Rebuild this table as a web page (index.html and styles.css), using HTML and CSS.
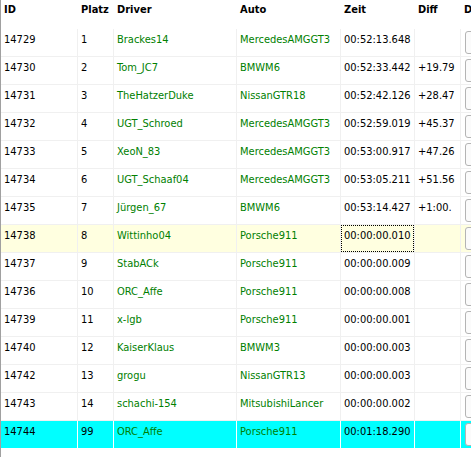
FILE: index.html
```html
<!DOCTYPE html>
<html lang="de">
<head>
<meta charset="utf-8">
<title>Ergebnisse</title>
<link rel="stylesheet" href="styles.css">
</head>
<body>
<div class="grid-wrap">
<table class="grid">
  <colgroup>
    <col class="c-id"><col class="c-platz"><col class="c-driver"><col class="c-auto"><col class="c-zeit"><col class="c-diff"><col class="c-d">
  </colgroup>
  <thead>
    <tr class="head">
      <th>ID</th><th>Platz</th><th>Driver</th><th>Auto</th><th>Zeit</th><th>Diff</th><th>D</th>
    </tr>
  </thead>
  <tbody>
    <tr><td>14729</td><td>1</td><td class="g">Brackes14</td><td class="g">MercedesAMGGT3</td><td>00:52:13.648</td><td></td><td class="btn-cell"><span class="btn"></span></td></tr>
    <tr><td>14730</td><td>2</td><td class="g">Tom_JC7</td><td class="g">BMWM6</td><td>00:52:33.442</td><td>+19.79</td><td class="btn-cell"><span class="btn"></span></td></tr>
    <tr><td>14731</td><td>3</td><td class="g">TheHatzerDuke</td><td class="g">NissanGTR18</td><td>00:52:42.126</td><td>+28.47</td><td class="btn-cell"><span class="btn"></span></td></tr>
    <tr><td>14732</td><td>4</td><td class="g">UGT_Schroed</td><td class="g">MercedesAMGGT3</td><td>00:52:59.019</td><td>+45.37</td><td class="btn-cell"><span class="btn"></span></td></tr>
    <tr><td>14733</td><td>5</td><td class="g">XeoN_83</td><td class="g">MercedesAMGGT3</td><td>00:53:00.917</td><td>+47.26</td><td class="btn-cell"><span class="btn"></span></td></tr>
    <tr><td>14734</td><td>6</td><td class="g">UGT_Schaaf04</td><td class="g">MercedesAMGGT3</td><td>00:53:05.211</td><td>+51.56</td><td class="btn-cell"><span class="btn"></span></td></tr>
    <tr><td>14735</td><td>7</td><td class="g">Jürgen_67</td><td class="g">BMWM6</td><td>00:53:14.427</td><td>+1:00.</td><td class="btn-cell"><span class="btn"></span></td></tr>
    <tr class="sel"><td>14738</td><td>8</td><td class="g">Wittinho04</td><td class="g">Porsche911</td><td class="focus"><span class="focus-box">00:00:00.010</span></td><td></td><td class="btn-cell"><span class="btn"></span></td></tr>
    <tr><td>14737</td><td>9</td><td class="g">StabACk</td><td class="g">Porsche911</td><td>00:00:00.009</td><td></td><td class="btn-cell"><span class="btn"></span></td></tr>
    <tr><td>14736</td><td>10</td><td class="g">ORC_Affe</td><td class="g">Porsche911</td><td>00:00:00.008</td><td></td><td class="btn-cell"><span class="btn"></span></td></tr>
    <tr><td>14739</td><td>11</td><td class="g">x-lgb</td><td class="g">Porsche911</td><td>00:00:00.001</td><td></td><td class="btn-cell"><span class="btn"></span></td></tr>
    <tr><td>14740</td><td>12</td><td class="g">KaiserKlaus</td><td class="g">BMWM3</td><td>00:00:00.003</td><td></td><td class="btn-cell"><span class="btn"></span></td></tr>
    <tr><td>14742</td><td>13</td><td class="g">grogu</td><td class="g">NissanGTR13</td><td>00:00:00.003</td><td></td><td class="btn-cell"><span class="btn"></span></td></tr>
    <tr><td>14743</td><td>14</td><td class="g">schachi-154</td><td class="g">MitsubishiLancer</td><td>00:00:00.002</td><td></td><td class="btn-cell"><span class="btn"></span></td></tr>
    <tr class="hl"><td>14744</td><td>99</td><td class="g">ORC_Affe</td><td class="g">Porsche911</td><td>00:01:18.290</td><td></td><td class="btn-cell"><span class="btn"></span></td></tr>
  </tbody>
</table>
</div>
</body>
</html>
```
FILE: styles.css
```css
html, body {
  margin: 0;
  padding: 0;
  background: #ffffff;
  overflow: hidden;
  width: 471px;
  height: 457px;
}

body {
  font-family: "DejaVu Sans Condensed", "DejaVu Sans", sans-serif;
  font-stretch: condensed;
  font-size: 11px;
  color: #000;
}

.grid-wrap {
  border-left: 1px solid #a0a0a0;
  height: 457px;
  width: 470px;
  overflow: hidden;
}

.grid {
  table-layout: fixed;
  border-collapse: separate;
  border-spacing: 0;
  width: 540px;
}

.c-id { width: 77px; }
.c-platz { width: 36px; }
.c-driver { width: 123px; }
.c-auto { width: 104px; }
.c-zeit { width: 74px; }
.c-diff { width: 46px; }
.c-d { width: 80px; }

.head th {
  font-weight: bold;
  text-align: left;
  vertical-align: top;
  height: 29px;
  padding: 3px 0 0 3px;
  box-sizing: border-box;
  white-space: nowrap;
  overflow: hidden;
}

.grid td {
  box-sizing: border-box;
  height: 28px;
  padding: 4px 0 0 3px;
  vertical-align: top;
  border-right: 1px solid #f0f0f0;
  border-bottom: 1px solid #f0f0f0;
  white-space: nowrap;
  overflow: hidden;
  line-height: 14px;
}

.grid td.g { color: #008000; }

.grid td.btn-cell {
  padding: 2px 0 0 4px;
  border-right: none;
}

.btn {
  display: block;
  width: 40px;
  height: 21px;
  border: 1px solid #b4b4b4;
  border-radius: 3px;
  background: #fbfbfb;
}

.sel td { background: #ffffe0; }

.hl td {
  background: #00ffff;
  border-right-color: #ffffff;
  border-bottom-color: #ffffff;
}

.grid td.focus {
  padding: 0;
}

.focus-box {
  display: block;
  height: 27px;
  box-sizing: border-box;
  border: 1px dotted #000;
  padding: 3px 0 0 2px;
}
```
